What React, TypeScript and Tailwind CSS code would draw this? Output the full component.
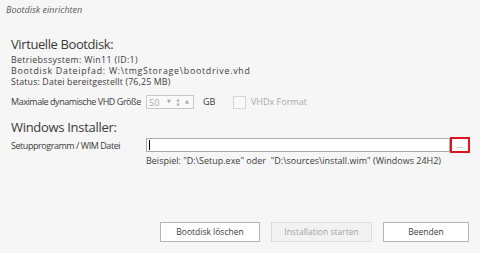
const ui = { fontFamily: '"Open Sans", "DejaVu Sans", sans-serif' };

function SpinBox() {
  return (
    <div className="flex items-center w-[48px] h-[14px] border border-[#c9c9c9] bg-[#f9f9f9] text-[9px] text-[#a8a8a8]">
      <span className="pl-[2px] w-[18px] leading-none">50</span>
      <span className="text-[5px] w-[8px] text-center">▼</span>
      <span className="flex flex-col text-[4px] leading-[5px] w-[10px] items-center">
        <span>▲</span>
        <span>▼</span>
      </span>
      <span className="text-[5px] w-[8px] text-center">▲</span>
    </div>
  );
}

function DialogButton({ label, disabled }: { label: string; disabled?: boolean }) {
  return (
    <button
      className={
        "w-full h-[20px] border text-[8.5px] " +
        (disabled
          ? "border-[#dcdcdc] bg-[#f2f2f2] text-[#a3a3a3]"
          : "border-[#b4b4b4] bg-white text-[#3a3a3a]")
      }
      disabled={disabled}
    >
      {label}
    </button>
  );
}

export default function App() {
  return (
    <div className="w-[480px] h-[253px] bg-[#f6f6f6] text-[#3c3c3c] overflow-hidden" style={ui}>
      <div className="pl-[6px] pt-[4px] text-[9px] italic text-[#5a5a5a] leading-[12px]">Bootdisk einrichten</div>

      <div className="pl-[11px] pt-[19px]">
        <div className="text-[13px] leading-[18px] tracking-[-0.4px] text-[#3a3a3a]">Virtuelle Bootdisk:</div>
        <div className="pt-[2px] text-[8.8px] leading-[11px] whitespace-nowrap">
          <div className="tracking-[0.35px]">Betriebssystem: Win11 (ID:1)</div>
          <div className="tracking-[0.75px]">Bootdisk Dateipfad: W:\tmgStorage\bootdrive.vhd</div>
          <div className="tracking-[0.15px]">Status: Datei bereitgestellt (76,25 MB)</div>
        </div>

        <div className="flex items-center h-[14px] mt-[7px] text-[9px] whitespace-nowrap">
          <span className="w-[135px] tracking-[-0.45px]">Maximale dynamische VHD Größe</span>
          <SpinBox />
          <span className="ml-[9px] w-[30px]">GB</span>
          <span className="w-[13px] h-[13px] border border-[#d6d6d6] bg-[#f9f9f9]" />
          <span className="ml-[5px] text-[#a8a8a8]">VHDx Format</span>
        </div>

        <div className="mt-[9px] text-[13px] leading-[18px] tracking-[-0.3px] text-[#3a3a3a]">Windows Installer:</div>

        <div className="flex mt-[1px] text-[9px] whitespace-nowrap">
          <span className="w-[135px] pt-[2px] tracking-[-0.45px]">Setupprogramm / WIM Datei</span>
          <div className="flex flex-col">
            <div className="flex items-center">
              <div className="w-[304px] h-[14px] border border-[#a8a8a8] bg-white flex items-center pl-[2px]">
                <span className="w-px h-[10px] bg-black" />
              </div>
              <div className="w-[20px] h-[16px] border-2 border-[#e0141e] bg-white flex items-center justify-center text-[8px] leading-none text-[#666]">
                ...
              </div>
            </div>
            <div className="mt-[2px] leading-[11px]">
              Beispiel: "D:\Setup.exe" oder &nbsp;"D:\sources\install.wim" (Windows 24H2)
            </div>
          </div>
        </div>
      </div>

      <div className="flex gap-[11px] pl-[160px] mt-[56px]">
        <span className="w-[100px] flex">
          <DialogButton label="Bootdisk löschen" />
        </span>
        <span className="w-[101px] flex">
          <DialogButton label="Installation starten" disabled />
        </span>
        <span className="w-[86px] flex">
          <DialogButton label="Beenden" />
        </span>
      </div>
    </div>
  );
}
